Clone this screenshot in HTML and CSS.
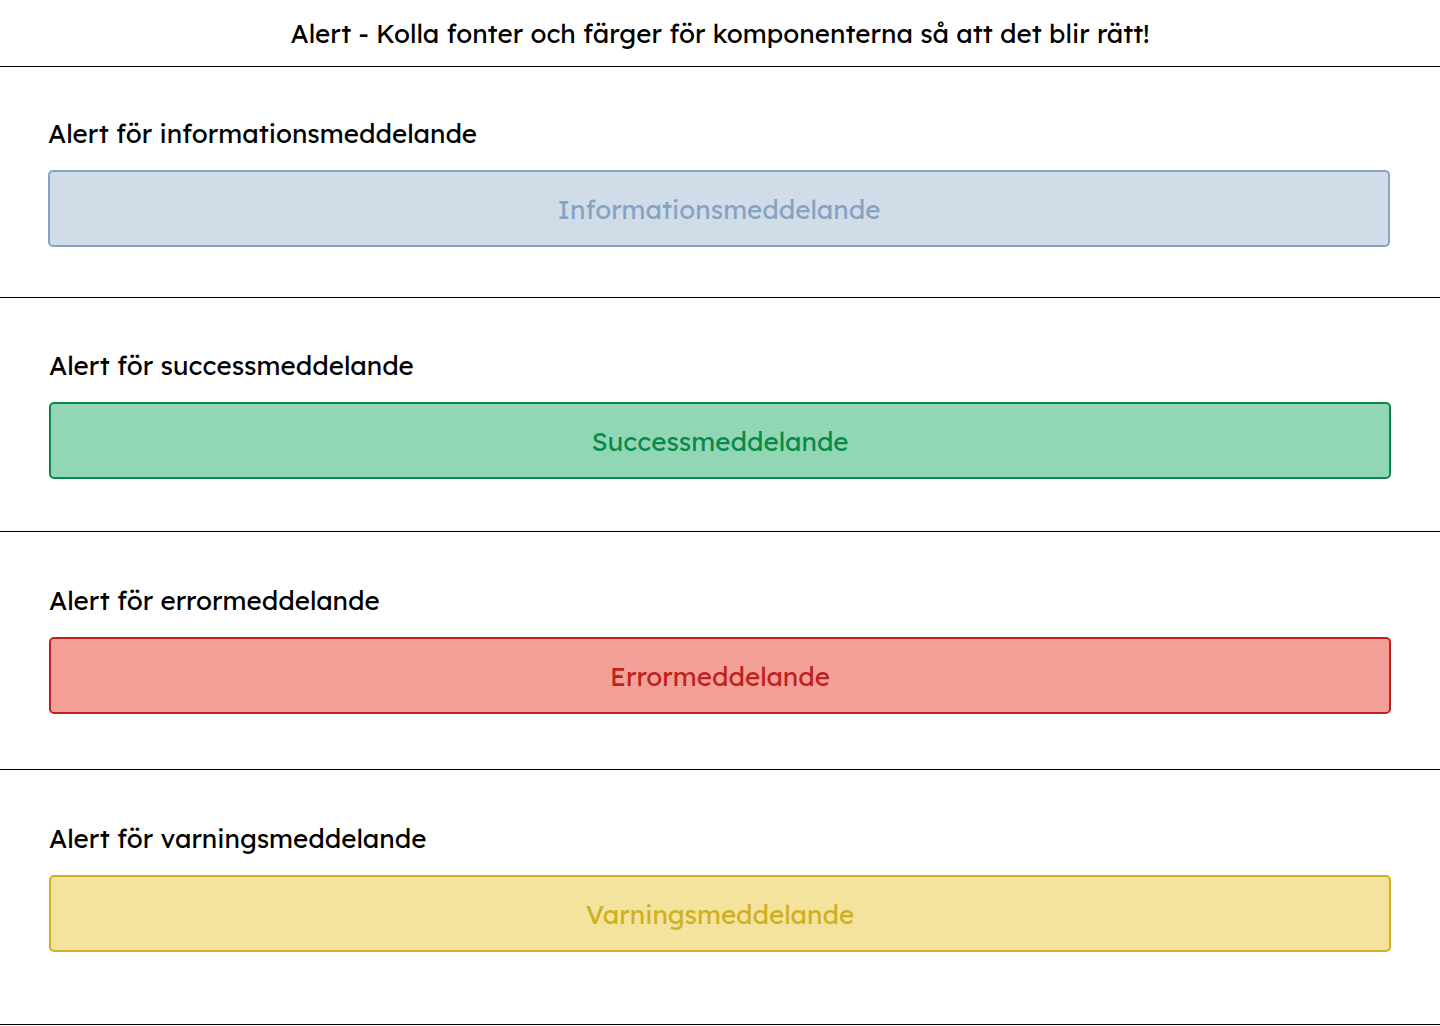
FILE: index.html
```html
<!DOCTYPE html>
<html lang="sv">
<head>
<meta charset="utf-8">
<title>Alert</title>
<link rel="stylesheet" href="styles.css">
</head>
<body>
<header class="page-header">
  <h1 class="page-title">Alert - Kolla fonter och färger för komponenterna så att det blir rätt!</h1>
</header>
<main>
  <section class="demo demo--first">
    <h2 class="demo-title">Alert för informationsmeddelande</h2>
    <div class="alert alert--info">Informationsmeddelande</div>
  </section>
  <section class="demo demo--second">
    <h2 class="demo-title">Alert för successmeddelande</h2>
    <div class="alert alert--success">Successmeddelande</div>
  </section>
  <section class="demo demo--third">
    <h2 class="demo-title">Alert för errormeddelande</h2>
    <div class="alert alert--error">Errormeddelande</div>
  </section>
  <section class="demo demo--last">
    <h2 class="demo-title">Alert för varningsmeddelande</h2>
    <div class="alert alert--warning">Varningsmeddelande</div>
  </section>
</main>
</body>
</html>
```

FILE: styles.css
```css
* { box-sizing: border-box; }

body {
  margin: 0;
  font-family: "Lexend", "Inter", "Noto Sans", sans-serif;
  color: #000;
  background: #fff;
}

.page-header {
  height: 67px;
  padding-top: 2px;
  border-bottom: 1px solid #000;
  display: flex;
  align-items: center;
  justify-content: center;
}

.page-title {
  margin: 0;
  font-size: 26px;
  font-weight: 400;
  line-height: 30px;
}

.demo {
  padding: 52px 49px 52px 49px;
  border-bottom: 1px solid #000;
  display: flex;
  flex-direction: column;
  gap: 20px;
}

.demo--first { padding: 51px 50px 50px 48px; }
.demo--second { padding-top: 52px; padding-bottom: 52px; }
.demo--third { padding-top: 53px; padding-bottom: 55px; }
.demo--last { padding-top: 53px; padding-bottom: 72px; }

.demo-title {
  margin: 0;
  font-size: 26px;
  font-weight: 400;
  line-height: 32px;
}

.alert {
  height: 77px;
  padding-top: 2px;
  border: 2px solid;
  border-radius: 5px;
  display: flex;
  align-items: center;
  justify-content: center;
  font-size: 26px;
  line-height: 30px;
}

.alert--info { background: #d0dde9; border-color: #86a3c3; color: #86a3c3; }
.alert--success { background: #91d7b5; border-color: #0a8a4a; color: #0a8a4a; }
.alert--error { background: #f3a098; border-color: #c0211d; color: #c0211d; }
.alert--warning { background: #f3e39c; border-color: #cfb021; color: #cfb021; }
```
